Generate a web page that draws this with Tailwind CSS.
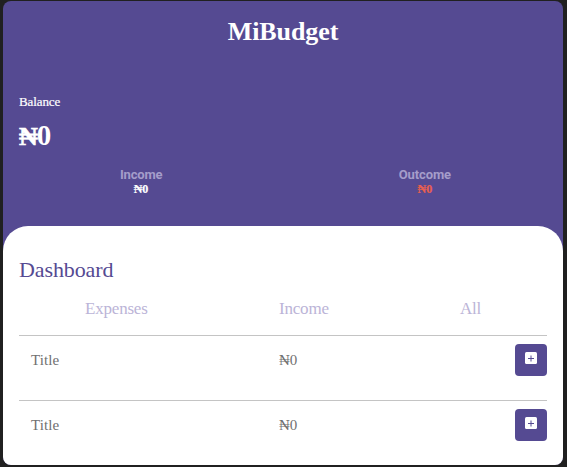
<!DOCTYPE html>
<html lang="en">
<head>
<meta charset="utf-8">
<title>MiBudget</title>
<script src="https://cdn.jsdelivr.net/npm/@tailwindcss/browser@4"></script>
</head>
<body class="h-[467px] overflow-hidden bg-[#202020] pt-px pl-[3px] font-['Liberation_Serif',serif]">
<main class="flex h-[464px] w-[560px] flex-col overflow-hidden rounded-[8px] bg-[#554a92]">
  <header class="h-[225px] shrink-0 px-4 pt-4 text-white">
    <h1 class="text-center text-[26px] leading-[30px] font-bold tracking-[-0.1px]">MiBudget</h1>
    <p class="mt-[47px] text-[13px] leading-4 tracking-[-0.1px] [-webkit-text-stroke:0.2px]">Balance</p>
    <p class="mt-[8px] h-[34px] text-[29px] leading-[34px] font-bold"><span class="text-[26px] tracking-[-1px] [-webkit-text-stroke:0.7px]">₦</span>0</p>
    <div class="mt-[15px] flex justify-between pr-[96px] pl-[101px] text-center font-bold">
      <div class="w-[42px]"><p class="font-[Roboto,sans-serif] text-[13px] leading-4 tracking-[-0.2px] text-[#a59dca]">Income</p><p class="text-[12px] leading-[13px] [-webkit-text-stroke:0.2px]">₦0</p></div>
      <div><p class="font-[Roboto,sans-serif] text-[13px] leading-4 tracking-[-0.1px] text-[#a59dca]">Outcome</p><p class="text-[12px] leading-[13px] text-[#e9604f] [-webkit-text-stroke:0.2px]">₦0</p></div>
    </div>
  </header>
  <section class="flex-1 rounded-t-[25px] bg-white px-4 pt-[31px]">
    <h2 class="text-[22px] leading-[26px] tracking-[-0.1px] text-[#554a92]">Dashboard</h2>
    <nav class="mt-4 flex h-[36px] pl-[66px] text-[17px] leading-5 tracking-[-0.2px] text-[#bbb4d7]">
      <a class="w-[194px]">Expenses</a><a class="w-[181px]">Income</a><a>All</a>
    </nav>
    <div class="flex h-[65px] border-t border-[#c4c4c4] pt-2 pl-3 text-[15px] text-[#707070]">
      <span class="w-[248px] leading-8 tracking-[0.1px]">Title</span><span class="flex-1 leading-8">₦0</span>
      <button class="flex h-8 w-8 justify-center rounded-[4px] bg-[#554a92] pt-2"><svg class="h-3 w-3" viewBox="0 0 12 12"><rect width="12" height="12" rx="1.5" fill="#fff"/><path d="M3 6.5h6M6 3.5v6" stroke="#554a92"/></svg></button>
    </div>
    <div class="flex h-[65px] border-t border-[#c4c4c4] pt-2 pl-3 text-[15px] text-[#707070]">
      <span class="w-[248px] leading-8 tracking-[0.1px]">Title</span><span class="flex-1 leading-8">₦0</span>
      <button class="flex h-8 w-8 justify-center rounded-[4px] bg-[#554a92] pt-2"><svg class="h-3 w-3" viewBox="0 0 12 12"><rect width="12" height="12" rx="1.5" fill="#fff"/><path d="M3 6.5h6M6 3.5v6" stroke="#554a92"/></svg></button>
    </div>
  </section>
</main>
</body>
</html>
